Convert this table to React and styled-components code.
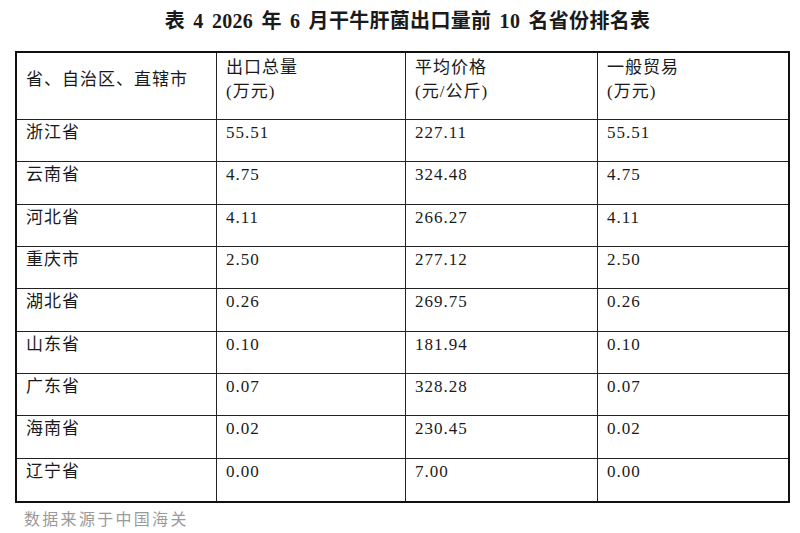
import React from "react";
import styled, { createGlobalStyle } from "styled-components";

const GlobalStyle = createGlobalStyle`
  body {
    margin: 0;
    background: #ffffff;
    font-family: "Liberation Serif", "Noto Sans CJK SC", serif;
    color: #1a1a1a;
  }
`;

const Page = styled.div`
  width: 800px;
  height: 533px;
  padding: 0 10px 0 15px;
  box-sizing: border-box;
`;

const Title = styled.h1`
  margin: 0;
  height: 51px;
  line-height: 43px;
  text-align: center;
  font-size: 20px;
  font-weight: bold;
  padding-left: 10px;
  letter-spacing: 0.3px;
  word-spacing: 3px;
`;

const Grid = styled.div`
  display: grid;
  grid-template-columns: 200px 189px 192px 190px;
  grid-template-rows: 67px repeat(9, 42.33px);
  width: 775px;
  box-sizing: border-box;
  border: 2px solid #111;
`;

const Cell = styled.div`
  box-sizing: border-box;
  border-right: ${(p) => (p.$last ? "none" : "1px solid #222")};
  border-bottom: ${(p) => (p.$bottom ? "none" : "1px solid #222")};
  padding: ${(p) => (p.$head ? "3px 6px 0 9px" : "1px 6px 0 9px")};
  font-size: 17px;
  line-height: 24px;
  letter-spacing: 1px;
  white-space: nowrap;
`;

const HeadSingle = styled.div`
  line-height: 48px;
`;

const Source = styled.div`
  margin: 3px 0 0 9px;
  font-family: "Noto Sans CJK SC", sans-serif;
  font-size: 16px;
  color: #9a9a9a;
  letter-spacing: 2.3px;
`;

const headers = [
  ["出口总量", "(万元)"],
  ["平均价格", "(元/公斤)"],
  ["一般贸易", "(万元)"],
];

const rows = [
  ["浙江省", "55.51", "227.11", "55.51"],
  ["云南省", "4.75", "324.48", "4.75"],
  ["河北省", "4.11", "266.27", "4.11"],
  ["重庆市", "2.50", "277.12", "2.50"],
  ["湖北省", "0.26", "269.75", "0.26"],
  ["山东省", "0.10", "181.94", "0.10"],
  ["广东省", "0.07", "328.28", "0.07"],
  ["海南省", "0.02", "230.45", "0.02"],
  ["辽宁省", "0.00", "7.00", "0.00"],
];

export default function App() {
  return (
    <Page>
      <GlobalStyle />
      <Title>表 4 2026 年 6 月干牛肝菌出口量前 10 名省份排名表</Title>
      <Grid>
        <Cell $head>
          <HeadSingle>省、自治区、直辖市</HeadSingle>
        </Cell>
        {headers.map((h, i) => (
          <Cell key={i} $head $last={i === 2}>
            {h[0]}
            <br />
            {h[1]}
          </Cell>
        ))}
        {rows.map((row, r) =>
          row.map((val, c) => (
            <Cell
              key={r + "-" + c}
              $last={c === 3}
              $bottom={r === rows.length - 1}
            >
              {val}
            </Cell>
          ))
        )}
      </Grid>
      <Source>数据来源于中国海关</Source>
    </Page>
  );
}
